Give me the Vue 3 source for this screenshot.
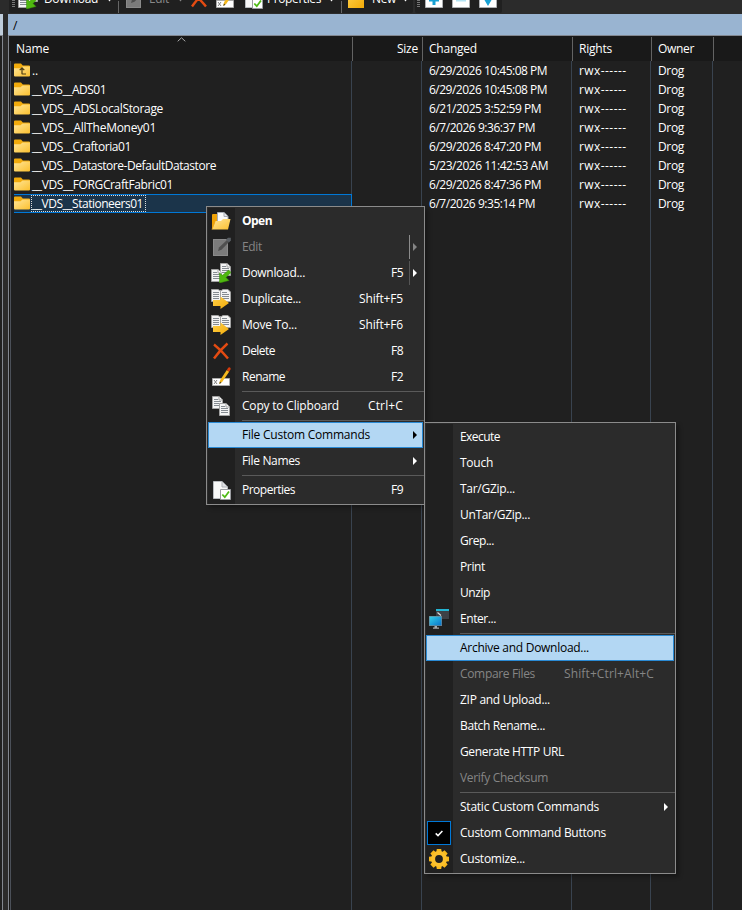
<script setup>
const tools = [
  { kind: 'grip', w: 9 },
  { kind: 'icon', icon: 'download', w: 26 },
  { kind: 'caption', label: 'Download', fit: 54, w: 62 },
  { kind: 'drop', w: 12 },
  { kind: 'sep', w: 6 },
  { kind: 'icon', icon: 'edit', w: 25 },
  { kind: 'caption', label: 'Edit', fit: 20, w: 28, off: true },
  { kind: 'drop', w: 12, off: true },
  { kind: 'icon', icon: 'delete', w: 26 },
  { kind: 'icon', icon: 'rename', w: 28 },
  { kind: 'icon', icon: 'props', w: 24 },
  { kind: 'caption', label: 'Properties', fit: 54, w: 61 },
  { kind: 'drop', w: 13 },
  { kind: 'sep', w: 6 },
  { kind: 'icon', icon: 'newfolder', w: 25 },
  { kind: 'caption', label: 'New', fit: 24, w: 30 },
  { kind: 'drop', w: 10 },
]
const selectTools = ['plus', 'minus', 'check']

const files = [
  { name: '..', fit: 6, date: '6/29/2026 10:45:08 PM', dfit: 118, up: true },
  { name: '__VDS__ADS01', fit: 74, date: '6/29/2026 10:45:08 PM', dfit: 118 },
  { name: '__VDS__ADSLocalStorage', fit: 131, date: '6/21/2025 3:52:59 PM', dfit: 112 },
  { name: '__VDS__AllTheMoney01', fit: 124, date: '6/7/2026 9:36:37 PM', dfit: 106 },
  { name: '__VDS__Craftoria01', fit: 99, date: '6/29/2026 8:47:20 PM', dfit: 112 },
  { name: '__VDS__Datastore-DefaultDatastore', fit: 184, date: '5/23/2026 11:42:53 AM', dfit: 119 },
  { name: '__VDS__FORGCraftFabric01', fit: 141, date: '6/29/2026 8:47:36 PM', dfit: 112 },
  { name: '__VDS__Stationeers01', fit: 111, date: '6/7/2026 9:35:14 PM', dfit: 106, selected: true },
]

const mainMenu = [
  { label: 'Open', fit: 30, icon: 'open', bold: true },
  { label: 'Edit', fit: 20, icon: 'edit', off: true, arrow: true, split: true },
  { label: 'Download...', fit: 63, key: 'F5', kfit: 12, icon: 'download', arrow: true, split: true },
  { label: 'Duplicate...', fit: 59, key: 'Shift+F5', kfit: 44, icon: 'move' },
  { label: 'Move To...', fit: 55, key: 'Shift+F6', kfit: 44, icon: 'move' },
  { label: 'Delete', fit: 33, key: 'F8', kfit: 12, icon: 'delete' },
  { label: 'Rename', fit: 43, key: 'F2', kfit: 12, icon: 'rename' },
  { sep: true },
  { label: 'Copy to Clipboard', fit: 97, key: 'Ctrl+C', kfit: 35, icon: 'copy' },
  { sep: true },
  { label: 'File Custom Commands', fit: 128, arrow: true, hot: true },
  { label: 'File Names', fit: 58, arrow: true },
  { sep: true },
  { label: 'Properties', fit: 53, key: 'F9', kfit: 12, icon: 'props' },
]

const subMenu = [
  { label: 'Execute', fit: 40 },
  { label: 'Touch', fit: 33 },
  { label: 'Tar/GZip...', fit: 55 },
  { label: 'UnTar/GZip...', fit: 70 },
  { label: 'Grep...', fit: 34 },
  { label: 'Print', fit: 25 },
  { label: 'Unzip', fit: 30 },
  { label: 'Enter...', fit: 36, icon: 'terminal' },
  { sep: true },
  { label: 'Archive and Download...', fit: 129, hot: true },
  { label: 'Compare Files', fit: 75, key: 'Shift+Ctrl+Alt+C', kfit: 90, off: true },
  { label: 'ZIP and Upload...', fit: 90 },
  { label: 'Batch Rename...', fit: 85 },
  { label: 'Generate HTTP URL', fit: 104 },
  { label: 'Verify Checksum', fit: 88, off: true },
  { sep: true },
  { label: 'Static Custom Commands', fit: 139, arrow: true },
  { label: 'Custom Command Buttons', fit: 146, checked: true },
  { label: 'Customize...', fit: 65, icon: 'gear' },
]

const menus = [
  { id: 'main', items: mainMenu },
  { id: 'sub', items: subMenu },
]

// Tracks each label so that it occupies its nominal width.
const vFit = {
  mounted(el, { value }) {
    if (!value) return
    const natural = el.getBoundingClientRect().width
    el.style.letterSpacing = `${(value - natural) / el.textContent.length}px`
  },
}
</script>

<template>
  <svg class="defs" width="0" height="0">
    <defs>
      <linearGradient id="gold" x1="0" y1="0" x2="1" y2="1">
        <stop offset="0" stop-color="#ffe69a" /><stop offset="1" stop-color="#fbc02e" />
      </linearGradient>
      <linearGradient id="deep" x1="0" y1="0" x2="1" y2="1">
        <stop offset="0" stop-color="#ffd04a" /><stop offset="1" stop-color="#f3ab08" />
      </linearGradient>
      <linearGradient id="screen" x1="0" y1="0" x2="1" y2="1">
        <stop offset="0" stop-color="#35d0e8" /><stop offset="1" stop-color="#0873cb" />
      </linearGradient>
      <symbol id="i-folder" viewBox="0 0 16 14">
        <path d="M0 1.5Q0 .5 1 .5H7L8.8 2.5H15Q16 2.5 16 3.5V8H0Z" fill="#f2ab0c" />
        <path d="M0 5.3H6.5L8.5 3.5H16V12.5Q16 13.5 15 13.5H1Q0 13.5 0 12.5Z" fill="url(#gold)" />
      </symbol>
      <symbol id="i-up" viewBox="0 0 16 14">
        <use href="#i-folder" />
        <path d="M8 11.3V5M5.7 7.2 8 4.8 10.3 7.2M8 11H12" fill="none" stroke="#4c3b12" stroke-width="1.2" />
      </symbol>
      <symbol id="i-page" viewBox="0 0 11 13">
        <path d="M.5.5H7L10.5 4V12.5H.5Z" fill="#f4f4f4" stroke="#a2a2a2" />
        <path d="M7 .5V4H10.5" fill="#fff" stroke="#a2a2a2" />
        <path d="M2 3.5H6M2 5.5H9M2 7.5H9M2 9.5H9" stroke="#858b91" />
      </symbol>
      <symbol id="i-open" viewBox="0 0 20 20">
        <path d="M1 4Q1 3 2 3H6L8 5V18H1Z" fill="#efa207" />
        <path d="M6.5 1.5H13L17 5.5V13H6.5Z" fill="#fafafa" stroke="#a9adb4" />
        <path d="M13 1.5V5.5H17" fill="#e2e4e8" stroke="#a9adb4" />
        <path d="M4.5 10H10L12 8H19.5L17 18.5H1Z" fill="url(#gold)" />
        <path d="M1 18.5 4 10.5" stroke="#e8a51b" stroke-width=".8" />
      </symbol>
      <symbol id="i-edit" viewBox="0 0 20 20">
        <path d="M2 2H17V19H2Z" fill="#8a8a8a" />
        <path d="M3 3H16V18H3Z" fill="#7b7b7b" />
        <path d="M7 14 8 10.5 16 3 18 5 10.5 12.8Z" fill="#4f4f4f" />
        <path d="M15 2.5 17 .8H19.8V3.5L18 5.5Z" fill="#5a5f64" />
      </symbol>
      <symbol id="i-download" viewBox="0 0 20 20">
        <use href="#i-page" x="9" y="0" width="11" height="13" />
        <use href="#i-page" x="0" y="6" width="11" height="13" />
        <path d="M17.8 7 20 9.5 15 14.5 18 17.5 8.5 20V10L11.5 12.2Z" fill="#4fb80f" stroke="#368b08" stroke-width=".5" />
      </symbol>
      <symbol id="i-move" viewBox="0 0 20 20">
        <path d="M.5.5H7L9.5 2 12 .5H17L19.5 3V12.5H.5Z" fill="#f4f4f4" stroke="#a2a2a2" />
        <path d="M9.5 1V12" stroke="#a2a2a2" />
        <path d="M2 3.5H8M2 5.5H8M2 7.5H8M2 9.5H8M11 3.5H16M11 5.5H18M11 7.5H18M11 9.5H18" stroke="#858b91" />
        <path d="M2 11H9.5V7.5L18 14 9.5 20V17H2Z" fill="url(#deep)" />
      </symbol>
      <symbol id="i-delete" viewBox="0 0 20 20">
        <path d="M3 3.5Q10 9 17 17.5M16.5 2.5Q9 9 3 17.5" fill="none" stroke="#e34b12" stroke-width="2.4" />
      </symbol>
      <symbol id="i-rename" viewBox="0 0 20 20">
        <path d="M1.5 11.5H18.5V18.5H1.5Z" fill="#fff" stroke="#aaa" />
        <path d="M3 13 6 17M6 13 3 17" stroke="#777" stroke-width=".9" />
        <path d="M8.3 17 9.2 13 15.8 3 18.2 4.8 11.5 14.5Z" fill="#f6b91d" />
        <path d="M15.8 3 17.2.8Q18 0 19 .6T19.5 2.6L18.2 4.8Z" fill="#d83b0b" />
        <path d="M8.3 17 8.9 14.5 10.5 15.7Z" fill="#54430d" />
      </symbol>
      <symbol id="i-copy" viewBox="0 0 20 20">
        <use href="#i-page" x="1" y="0" width="11" height="13" />
        <use href="#i-page" x="8" y="7" width="11" height="13" />
      </symbol>
      <symbol id="i-props" viewBox="0 0 20 20">
        <path d="M2.5 1.5H11L16.5 7V18.5H2.5Z" fill="#f8f8f8" stroke="#b9bcc0" />
        <path d="M11 1.5V7H16.5" fill="#dfe1e5" stroke="#b1b4b8" />
        <path d="M9.5 9.5H19.5V19.5H9.5Z" fill="#fff" stroke="#9a9ca0" />
        <path d="M11.3 14.5 13.8 17.2 18 11.5" fill="none" stroke="#4fbb16" stroke-width="1.8" />
      </symbol>
      <symbol id="i-newfolder" viewBox="0 0 20 20">
        <path d="M1 3H17V19H1Z" fill="url(#deep)" />
      </symbol>
      <symbol id="i-terminal" viewBox="0 0 20 20">
        <path d="M7 0H20V10H7Z" fill="#3d4146" />
        <path d="M7 0H20V2H7Z" fill="#23b5d3" />
        <path d="M8.5 3.5 12 6.5" stroke="#ddd" stroke-width="1.2" />
        <path d="M0 7H13V17H0Z" fill="#77828a" />
        <path d="M.6 7.6H12.4V16.4H.6Z" fill="url(#screen)" />
        <path d="M5.5 17H8V18.5H10V19.7H4V18.5H5.5Z" fill="#a5a8aa" />
      </symbol>
      <symbol id="i-gear" viewBox="0 0 20 20">
        <g fill="#f9b91c">
          <path id="tooth" d="M7.8 0H12.2L12.8 4H7.2ZM7.8 20H12.2L12.8 16H7.2Z" />
          <use href="#tooth" transform="rotate(45 10 10)" />
          <use href="#tooth" transform="rotate(90 10 10)" />
          <use href="#tooth" transform="rotate(135 10 10)" />
        </g>
        <circle cx="10" cy="10" r="5.9" fill="none" stroke="#fbc02d" stroke-width="4" />
      </symbol>
      <symbol id="i-plus" viewBox="0 0 20 20">
        <path d="M1.5 1.5H18.5V18.5H1.5Z" fill="#fff" stroke="#aeb0b3" />
        <path d="M10 5V16M5 11H15" stroke="#18a1d4" stroke-width="3" />
      </symbol>
      <symbol id="i-minus" viewBox="0 0 20 20">
        <path d="M1.5 1.5H18.5V18.5H1.5Z" fill="#fff" stroke="#aeb0b3" />
        <path d="M5 11.5H15" stroke="#b3e3f3" stroke-width="2" />
      </symbol>
      <symbol id="i-check" viewBox="0 0 20 20">
        <path d="M1.5 1.5H18.5V18.5H1.5Z" fill="#fff" stroke="#aeb0b3" />
        <path d="M7 9 10 14 13 9" fill="none" stroke="#18a1d4" stroke-width="3" />
      </symbol>
    </defs>
  </svg>

  <div class="window">
    <header class="toolbars">
      <div class="toolbar">
        <div v-for="(t, i) in tools" :key="i" :class="['tool', t.kind, { off: t.off }]" :style="{ width: t.w + 'px' }">
          <svg v-if="t.icon" class="icon"><use :href="'#i-' + t.icon" /></svg>
          <span v-else-if="t.label" v-fit="t.fit">{{ t.label }}</span>
        </div>
      </div>
      <div class="toolbar select">
        <div class="tool grip"></div>
        <div v-for="s in selectTools" :key="s" class="tool box">
          <svg class="icon"><use :href="'#i-' + s" /></svg>
        </div>
      </div>
    </header>

    <div class="panes">
      <aside class="left"><div class="path dim"></div><div class="edge"></div></aside>
      <main class="right">
        <div class="path">/</div>
        <section class="list">
          <div class="cols head">
            <div class="c name"><span v-fit="33">Name</span>
              <svg class="sort" width="9" height="5" viewBox="0 0 9 5"><path d="M.7 4.3 4.5.8 8.3 4.3" fill="none" stroke="#aaa" /></svg>
            </div>
            <div class="c size"><span v-fit="21">Size</span></div>
            <div class="c date"><span v-fit="48">Changed</span></div>
            <div class="c rights"><span v-fit="33">Rights</span></div>
            <div class="c owner"><span v-fit="36">Owner</span></div>
          </div>
          <div class="rows">
            <div v-for="f in files" :key="f.name" class="cols row">
              <div :class="['c', 'name', { selected: f.selected }]">
                <svg class="folder" width="16" height="14"><use :href="f.up ? '#i-up' : '#i-folder'" /></svg>
                <span class="label"><span v-fit="f.fit">{{ f.name }}</span></span>
              </div>
              <div class="c size"></div>
              <div class="c date"><span v-fit="f.dfit">{{ f.date }}</span></div>
              <div class="c rights"><span v-fit="47.5">rwx------</span></div>
              <div class="c owner"><span v-fit="26">Drog</span></div>
            </div>
            <div class="cols rest">
              <div class="c name"></div><div class="c size"></div><div class="c date"></div>
              <div class="c rights"></div><div class="c owner"></div>
            </div>
          </div>
        </section>
      </main>
    </div>

    <nav v-for="m in menus" :key="m.id" :class="['menu', m.id]">
      <template v-for="(it, i) in m.items" :key="i">
        <div v-if="it.sep" class="line"></div>
        <div v-else :class="['item', { hot: it.hot, off: it.off, bold: it.bold }]">
          <div class="slot">
            <svg v-if="it.icon" class="icon"><use :href="'#i-' + it.icon" /></svg>
            <div v-if="it.checked" class="checkbox">
              <svg width="8" height="7" viewBox="0 0 8 7"><path d="M.7 3.4 3 5.6 7.4 1" fill="none" stroke="#fff" stroke-width="1.5" /></svg>
            </div>
          </div>
          <span class="text"><span v-fit="it.fit">{{ it.label }}</span></span>
          <span class="key"><span v-if="it.key" v-fit="it.kfit">{{ it.key }}</span></span>
          <div :class="['more', { split: it.split }]">
            <svg v-if="it.arrow" width="4" height="8" viewBox="0 0 4 8"><path d="M0 0 4 4 0 8Z" fill="currentColor" /></svg>
          </div>
        </div>
      </template>
    </nav>
  </div>
</template>

<style>
body { background: #202020; overflow: hidden; }
</style>

<style scoped>
.defs { position: absolute; }
.window {
  position: relative; width: 742px; height: 910px; overflow: hidden;
  display: flex; flex-direction: column;
  background: #2b2b2b; color: #fff;
  font: 12px/18px "Open Sans", "Noto Sans", sans-serif;
  font-kerning: none; white-space: nowrap;
}
.icon { width: 20px; height: 20px; display: block; flex: none; }

.toolbars { display: flex; height: 14px; flex: none; padding-left: 9px; gap: 2px; overflow: hidden; }
.toolbar { display: flex; width: 404px; height: 13px; background: #202020; overflow: hidden; border-radius: 0 0 2px 2px; }
.toolbar.select { width: 87px; }
.tool { flex: none; height: 20px; margin-top: -11px; display: flex; align-items: center; }
.tool.off { color: #888; }
.grip::before {
  content: ""; width: 3px; height: 18px; margin-left: 3px;
  background: repeating-linear-gradient(#777 0 1px, transparent 1px 2px);
}
.select .grip { width: 9px; }
.select .grip::before { margin-left: 2px; }
.box { width: 27px; }
.drop::before {
  content: ""; width: 3px; height: 2px; background: currentColor; margin: 3px 0 0 2px;
  clip-path: polygon(0 0, 100% 0, 50% 100%);
}
.tool.sep { height: 13px; margin-top: 0; }
.tool.sep::before { content: ""; width: 1px; height: 12px; background: #666; }

.panes { flex: 1; display: flex; gap: 5px; min-height: 0; }
.left { width: 3px; display: flex; flex-direction: column; }
.edge { flex: 1; border-top: 1px solid #828790; border-right: 1px solid #828790; background: #202020; }
.right { flex: 1; display: flex; flex-direction: column; min-width: 0; }
.path { height: 21px; flex: none; background: #99b4d1; color: #000; padding: 1px 0 0 5px; line-height: 21px; box-sizing: border-box; }
.dim { background: #bfcddb; padding: 0; }

.list { flex: 1; display: flex; flex-direction: column; border: solid #828790; border-width: 1px 0 0 1px; background: #191919; }
.cols { display: flex; flex: none; }
.c { box-sizing: border-box; border-right: 1px solid #39434f; display: flex; align-items: center; flex: none; padding-left: 7px; }
.size { width: 70px; }
.date { width: 150px; }
.rights { width: 79px; }
.owner { width: 62px; }
.head { height: 25px; padding-top: 1px; box-sizing: border-box; }
.head .c { border-color: #636363; padding-left: 6px; }
.head .name { width: 344px; position: relative; padding-left: 7px; }
.head .size { justify-content: flex-end; padding-right: 4px; }
.sort { position: absolute; left: 168px; top: 0; }
.rows { flex: 1; display: flex; flex-direction: column; margin-left: 1px; border-left: 1px solid #4b5058; background: #202020; }
.row { height: 19px; }
.row .c { padding-top: 1px; }
.rows .name { width: 341px; padding-left: 3px; }
.row .name { padding-top: 0; }
.rest { flex: 1; }
.folder { margin-top: -2px; flex: none; }
.label { margin-left: 1px; padding: 0 0 0 1px; height: 17px; line-height: 18px; box-sizing: border-box; }
.row .selected {
  background: linear-gradient(#0078d7 0 1px, #1b344a 1px 18px, #0078d7 18px) 3px 0 / 100% 100% no-repeat;
  border-right-color: #0078d7;
}
.selected .label { outline: 1px dotted #ddd; outline-offset: -1px; padding-right: 3px; }

.menu {
  position: absolute; box-sizing: border-box; border: 1px solid #8b8b8b; padding: 1px 0 0;
  background: linear-gradient(#202020, #202020) 1px 1px / 27px 100% no-repeat #2b2b2b;
  box-shadow: 3px 3px 4px rgba(0, 0, 0, .3);
}
.main { left: 206px; top: 206px; width: 219px; height: 299px; }
.sub { left: 424px; top: 422px; width: 252px; height: 452px; }
.item { height: 26px; margin: 0 1px; display: flex; align-items: center; box-sizing: border-box; }
.item.off { color: #858585; }
.item.bold { font-weight: 700; }
.item.hot { background: #b3d7f3; color: #000; box-shadow: inset 0 0 0 1px #2a8ad4; }
.slot { width: 34px; padding-left: 3px; box-sizing: border-box; flex: none; }
.text { flex: 1; }
.more { width: 20px; height: 24px; display: flex; align-items: center; padding-left: 10px; box-sizing: border-box; }
.more.split { background: linear-gradient(#555, #555) 6px 0 / 1px 100% no-repeat; }
.off .split { background-image: linear-gradient(#8b8b8b, #8b8b8b); }
.line { height: 3px; margin-left: 35px; background: linear-gradient(#5a5a5a, #5a5a5a) 0 1px / 100% 1px no-repeat; }
.checkbox { width: 24px; height: 24px; box-sizing: border-box; margin-left: -2px; border: 1px solid #0078d7; background: #000; display: grid; place-items: center; }
</style>
